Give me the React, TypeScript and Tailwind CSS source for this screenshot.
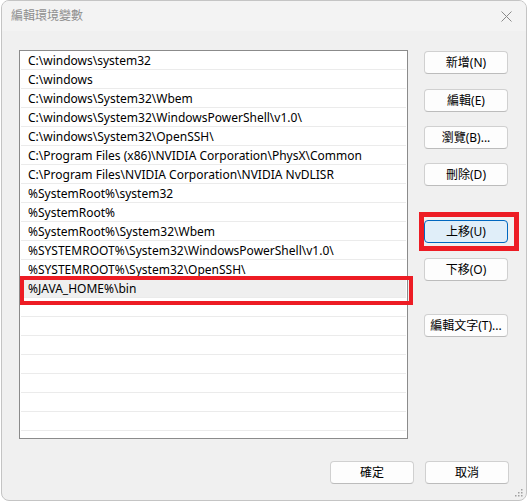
import React from "react";

const rows = [
  "C:\\windows\\system32",
  "C:\\windows",
  "C:\\windows\\System32\\Wbem",
  "C:\\windows\\System32\\WindowsPowerShell\\v1.0\\",
  "C:\\windows\\System32\\OpenSSH\\",
  "C:\\Program Files (x86)\\NVIDIA Corporation\\PhysX\\Common",
  "C:\\Program Files\\NVIDIA Corporation\\NVIDIA NvDLISR",
  "%SystemRoot%\\system32",
  "%SystemRoot%",
  "%SystemRoot%\\System32\\Wbem",
  "%SYSTEMROOT%\\System32\\WindowsPowerShell\\v1.0\\",
  "%SYSTEMROOT%\\System32\\OpenSSH\\",
  "%JAVA_HOME%\\bin",
];

const allRows = [...rows, ...Array(7).fill("")];

function Btn({ label, className = "", active = false }: { label: string; className?: string; active?: boolean }) {
  return (
    <div
      className={
        "w-[84px] h-[23px] rounded-[4px] flex items-center justify-center text-[12px] text-black " +
        (active
          ? "bg-[#e0eef9] border border-[#0067c0] "
          : "bg-[#fdfdfd] border border-[#d0d0d0] border-b-[#bcbcbc] ") +
        className
      }
    >
      {label}
    </div>
  );
}

export default function App() {
  return (
    <div
      className="relative w-[527px] h-[501px] bg-white overflow-hidden"
      style={{ fontFamily: '"Noto Sans", "Noto Sans CJK TC", sans-serif' }}
    >
      <div className="ml-[1px] w-[526px] h-[501px] rounded-[8px] border border-[#c4c4c4] bg-[#f0f0f0] flex flex-col overflow-hidden relative">
        <div className="h-[30px] bg-[#f3f3f3] flex items-center justify-between pl-[9px] pr-[14px] shrink-0">
          <span className="text-[12px] text-[#8e8e8e]">編輯環境變數</span>
          <svg width="11" height="11" viewBox="0 0 11 11" className="mt-[1px]">
            <path d="M0.5 0.5 L10.5 10.5 M10.5 0.5 L0.5 10.5" stroke="#8a8a8a" strokeWidth="1" />
          </svg>
        </div>
        <div className="flex flex-col px-[17px] pt-[19px]">
          <div className="flex gap-[16px]">
            <div className="w-[389px] h-[389px] border border-[#8b8b8b] bg-white overflow-hidden">
              {allRows.map((r, i) => (
                <div
                  key={i}
                  className={
                    "h-[19px] mx-[1px] border-b border-[#ebebeb] pl-[7px] pt-[1px] flex items-center text-[12px] text-black whitespace-nowrap " +
                    (i === 12 ? "bg-[#efefef]" : "")
                  }
                >
                  {r}
                </div>
              ))}
            </div>
            <div className="flex flex-col pt-[1px]">
              <Btn label="新增(N)" />
              <Btn label="編輯(E)" className="mt-[15px]" />
              <Btn label="瀏覽(B)..." className="mt-[14px]" />
              <Btn label="刪除(D)" className="mt-[14px]" />
              <Btn label="上移(U)" className="mt-[34px]" active />
              <Btn label="下移(O)" className="mt-[15px]" />
              <Btn label="編輯文字(T)..." className="mt-[33px]" />
            </div>
          </div>
          <div className="flex justify-end gap-[11px] mt-[22px]">
            <Btn label="確定" />
            <Btn label="取消" />
          </div>
        </div>
        <svg width="8" height="8" viewBox="0 0 8 8" className="absolute right-[3px] bottom-[3px]">
          <rect x="6" y="0" width="1.5" height="1.5" fill="#a0a0a0" />
          <rect x="3" y="3" width="1.5" height="1.5" fill="#a0a0a0" />
          <rect x="6" y="3" width="1.5" height="1.5" fill="#a0a0a0" />
          <rect x="0" y="6" width="1.5" height="1.5" fill="#a0a0a0" />
          <rect x="3" y="6" width="1.5" height="1.5" fill="#a0a0a0" />
          <rect x="6" y="6" width="1.5" height="1.5" fill="#a0a0a0" />
        </svg>
      </div>
      <div className="absolute left-[20px] top-[276px] w-[393px] h-[29px] border-[4px] border-[#ed1c24]" />
      <div className="absolute left-[419px] top-[212px] w-[100px] h-[39px] border-[5px] border-[#ed1c24]" />
    </div>
  );
}
